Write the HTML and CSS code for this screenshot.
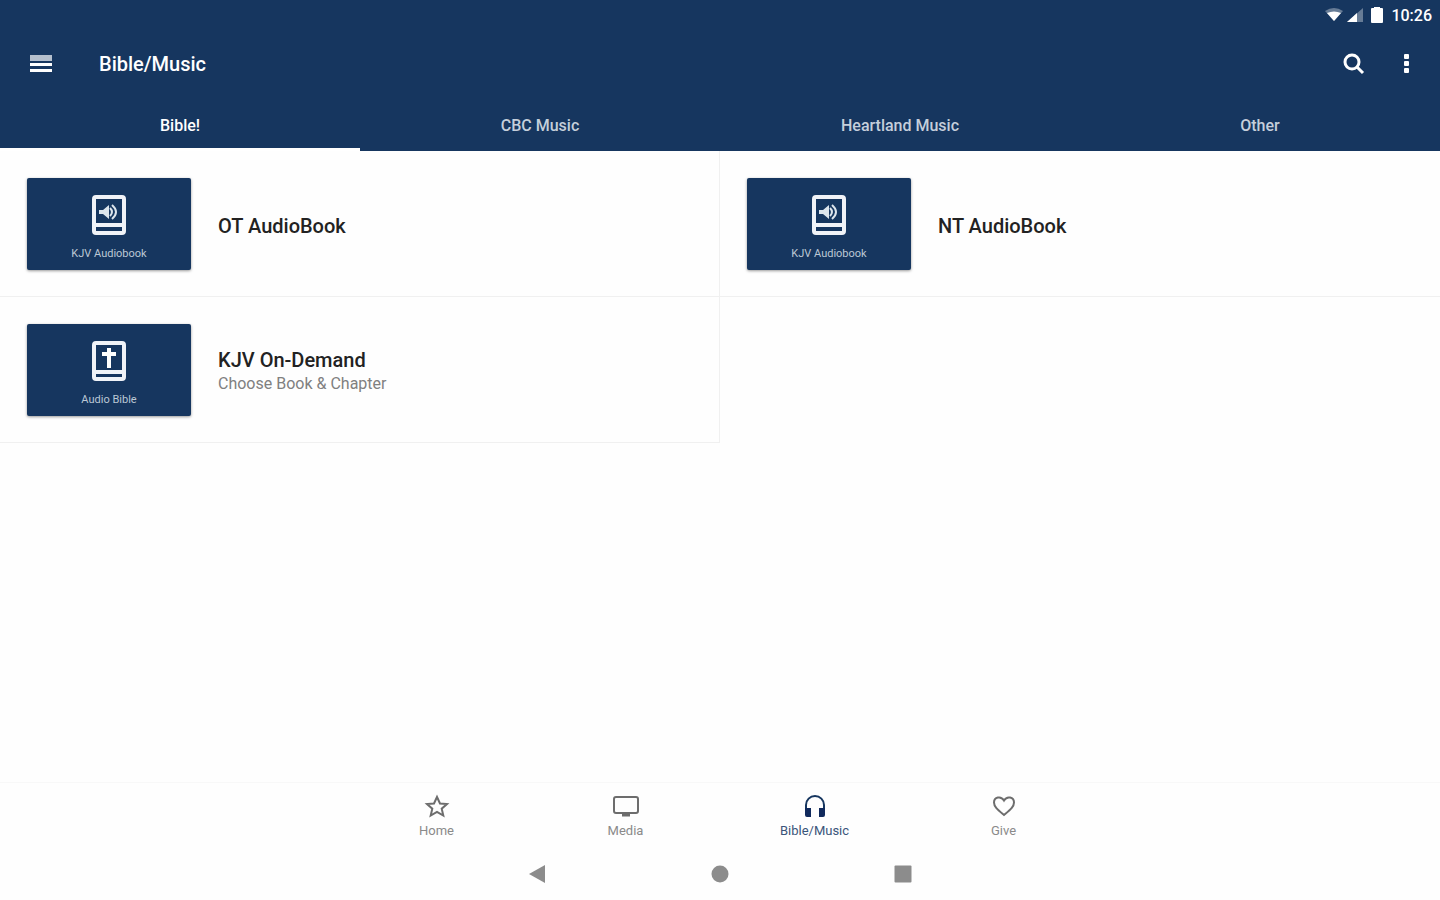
FILE: index.html
```html
<!DOCTYPE html>
<html lang="en">
<head>
  <meta charset="UTF-8" />
  <meta name="viewport" content="width=device-width, initial-scale=1.0"/>
  <title>Bible/Music</title>
  <link rel="stylesheet" href="styles.css">
</head>
<body>
  <header class="app-header">
    <div class="status-bar">
      <svg width="18" height="14" viewBox="0 0 18 14"><path d="M0 3Q9-3 18 3L9 13z" fill="#fff" opacity=".35"/><path d="M2 5Q9 2 16 5L9 13z" fill="#fff"/></svg>
      <svg class="signal" width="16" height="14" viewBox="0 0 16 14"><path d="M0 14L16 0V14z" fill="#fff" opacity=".35"/><path d="M0 14L10 5V14z" fill="#fff"/></svg>
      <svg width="12" height="16" viewBox="0 0 12 16"><path d="M3 0h6v1h2q1 0 1 1v13q0 1-1 1H1q-1 0-1-1V2q0-1 1-1h2z" fill="#fff"/></svg>
      <span class="clock">10:26</span>
    </div>

    <div class="toolbar">
      <button class="icon-btn" aria-label="Menu">
        <svg width="22" height="18" viewBox="0 0 22 18"><path d="M0 0h22v6H0z" fill="#b4bfcd"/><path d="M0 8h22v3H0zM0 14h22v3H0z" fill="#fff"/></svg>
      </button>
      <h1>Bible/Music</h1>
      <button class="icon-btn" aria-label="Search">
        <svg width="22" height="22" viewBox="0 0 22 22" fill="none" stroke="#fff" stroke-width="3"><circle cx="9" cy="9" r="7"/><path d="M14 14l6 6"/></svg>
      </button>
      <button class="icon-btn" aria-label="More options">
        <svg width="5" height="20" viewBox="0 0 5 20" fill="#fff"><rect width="5" height="5" rx="1"/><rect y="7" width="5" height="5" rx="1"/><rect y="14" width="5" height="5" rx="1"/></svg>
      </button>
    </div>

    <nav class="tabs">
      <a href="#" class="tab active">Bible!</a>
      <a href="#" class="tab">CBC Music</a>
      <a href="#" class="tab">Heartland Music</a>
      <a href="#" class="tab">Other</a>
    </nav>
  </header>

  <main>
    <div class="list">
      <a href="#" class="item left">
        <div class="thumb">
          <svg width="34" height="40" viewBox="0 0 34 40"><rect x="2" y="2" width="30" height="36" rx="2" fill="none" stroke="#f0f3f8" stroke-width="4"/><path d="M4 30h26" stroke="#f0f3f8" stroke-width="4"/><path d="M7 15h4l6-5v14l-6-5H7z" fill="#dde5ec"/><path d="M18 13q4 4 0 8M20 10q8 7 0 14" fill="none" stroke="#dde5ec" stroke-width="2"/></svg>
          <span>KJV Audiobook</span>
        </div>
        <div class="text"><h2>OT AudioBook</h2></div>
      </a>
      <a href="#" class="item">
        <div class="thumb">
          <svg width="34" height="40" viewBox="0 0 34 40"><rect x="2" y="2" width="30" height="36" rx="2" fill="none" stroke="#f0f3f8" stroke-width="4"/><path d="M4 30h26" stroke="#f0f3f8" stroke-width="4"/><path d="M7 15h4l6-5v14l-6-5H7z" fill="#dde5ec"/><path d="M18 13q4 4 0 8M20 10q8 7 0 14" fill="none" stroke="#dde5ec" stroke-width="2"/></svg>
          <span>KJV Audiobook</span>
        </div>
        <div class="text"><h2>NT AudioBook</h2></div>
      </a>
      <a href="#" class="item left">
        <div class="thumb">
          <svg width="34" height="40" viewBox="0 0 34 40"><rect x="2" y="2" width="30" height="36" rx="2" fill="none" stroke="#f0f3f8" stroke-width="4"/><path d="M4 31h26" stroke="#f0f3f8" stroke-width="4"/><path d="M15 7h4v4h5v4h-5v12h-4V15h-5v-4h5z" fill="#fff"/></svg>
          <span>Audio Bible</span>
        </div>
        <div class="text">
          <h2>KJV On-Demand</h2>
          <p>Choose Book &amp; Chapter</p>
        </div>
      </a>
    </div>
  </main>

  <footer>
    <nav class="bottom-nav">
      <a href="#">
        <svg width="26" height="24" viewBox="0 0 26 24" fill="none" stroke="#6d6d6d" stroke-width="2"><path d="M13 3l3 6.500 7 .6-5.300 4.600 1.600 6.800L13 18l-6.300 3.500 1.600-6.800L3 10.100l7-.6z"/></svg>
        Home
      </a>
      <a href="#">
        <svg width="26" height="24" viewBox="0 0 26 24" fill="none" stroke="#6d6d6d" stroke-width="2"><rect x="1" y="3" width="24" height="16" rx="2"/><path d="M9 21h8" stroke-width="3"/></svg>
        Media
      </a>
      <a href="#" class="active">
        <svg width="26" height="24" viewBox="0 0 26 24"><path d="M4 20v-9a9 9 0 0 1 18 0v9" fill="none" stroke="#16365f" stroke-width="2"/><path d="M3 14h6v9H5q-2 0-2-2zM17 14h6v7q0 2-2 2h-4z" fill="#10295c"/></svg>
        Bible/Music
      </a>
      <a href="#">
        <svg width="26" height="24" viewBox="0 0 26 24" fill="none" stroke="#6d6d6d" stroke-width="2"><path d="M13 21C7 16 3 13 3 8.500 3 3 10 1.500 13 6.500 16 1.500 23 3 23 8.500 23 13 19 16 13 21z"/></svg>
        Give
      </a>
    </nav>
    <div class="system-nav">
      <button aria-label="Back"><svg width="18" height="18" viewBox="0 0 18 18"><path d="M1 9L17 0v18z" fill="#8c8c8c"/></svg></button>
      <button aria-label="Home screen"><svg width="18" height="18" viewBox="0 0 18 18"><circle cx="9" cy="9" r="8.500" fill="#8c8c8c"/></svg></button>
      <button aria-label="Recent apps"><svg width="18" height="18" viewBox="0 0 18 18"><rect x=".5" y=".5" width="17" height="17" rx="1" fill="#8c8c8c"/></svg></button>
    </div>
  </footer>
</body>
</html>
```

FILE: styles.css
```css
* { box-sizing: border-box; }
body {
  font-family: Roboto, sans-serif;
  background-color: #fefefe;
  color: #222;
  display: flex;
  flex-direction: column;
  min-height: 100vh;
  margin: 0;
}
h1, h2, p { margin: 0; }
a { color: inherit; text-decoration: none; }
svg { display: block; flex-shrink: 0; }
button {
  background: none;
  border: none;
  padding: 0;
  cursor: pointer;
}

/* Header */
.app-header {
  background-color: #16365f;
  color: #fff;
}
.status-bar {
  height: 28px;
  display: flex;
  justify-content: flex-end;
  align-items: center;
  gap: 4px;
  padding: 2px 8px 0 0;
}
.signal { margin-right: 4px; }
.clock {
  font-size: 16px;
  font-weight: 500;
  margin-left: 4px;
}
.toolbar {
  height: 72px;
  display: flex;
  align-items: center;
  padding: 0 8px 0 15px;
}
.toolbar h1 {
  flex: 1;
  font-size: 20px;
  font-weight: 500;
  padding-left: 32px;
}
.icon-btn {
  width: 52px;
  height: 48px;
  display: flex;
  align-items: center;
  justify-content: center;
}
.tabs {
  display: grid;
  grid-template-columns: repeat(4, 1fr);
}
.tab {
  height: 51px;
  line-height: 52px;
  font-size: 16px;
  font-weight: 500;
  text-align: center;
  color: #c5cfdb;
}
.tab.active {
  color: #fff;
  border-bottom: 3px solid #fff;
}

/* Media list */
main { flex: 1; }
.list {
  display: grid;
  grid-template-columns: 1fr 1fr;
}
.item {
  display: flex;
  align-items: center;
  gap: 27px;
  padding: 27px 27px 26px;
  border-bottom: 1px solid #f0f0f0;
}
.item.left { border-right: 1px solid #f0f0f0; }
.thumb {
  width: 164px;
  height: 92px;
  display: flex;
  flex-direction: column;
  align-items: center;
  gap: 13px;
  padding-top: 17px;
  background-color: #16365f;
  border-radius: 2px;
  box-shadow: 0 1px 3px rgba(0,0,0,0.4);
}
.thumb span {
  font-size: 11px;
  line-height: 12px;
  color: #bcc8d5;
}
.text { padding-top: 4px; }
.text h2 {
  font-size: 20px;
  font-weight: 500;
  line-height: 24px;
}
.text p {
  font-size: 16px;
  line-height: 24px;
  color: #808080;
}

/* Bottom navigation */
footer { border-top: 1px solid #f8f8f8; }
.bottom-nav {
  max-width: 756px;
  height: 65px;
  margin: 0 auto;
  padding-top: 11px;
  display: grid;
  grid-template-columns: repeat(4, 1fr);
}
.bottom-nav a {
  display: flex;
  flex-direction: column;
  align-items: center;
  gap: 4px;
  font-size: 13px;
  line-height: 18px;
  color: #8a8a8a;
}
.bottom-nav a.active { color: #3a557a; }
.system-nav {
  max-width: 549px;
  height: 52px;
  margin: 0 auto;
  display: grid;
  grid-template-columns: repeat(3, 1fr);
}
.system-nav button {
  display: flex;
  align-items: center;
  justify-content: center;
}
```
